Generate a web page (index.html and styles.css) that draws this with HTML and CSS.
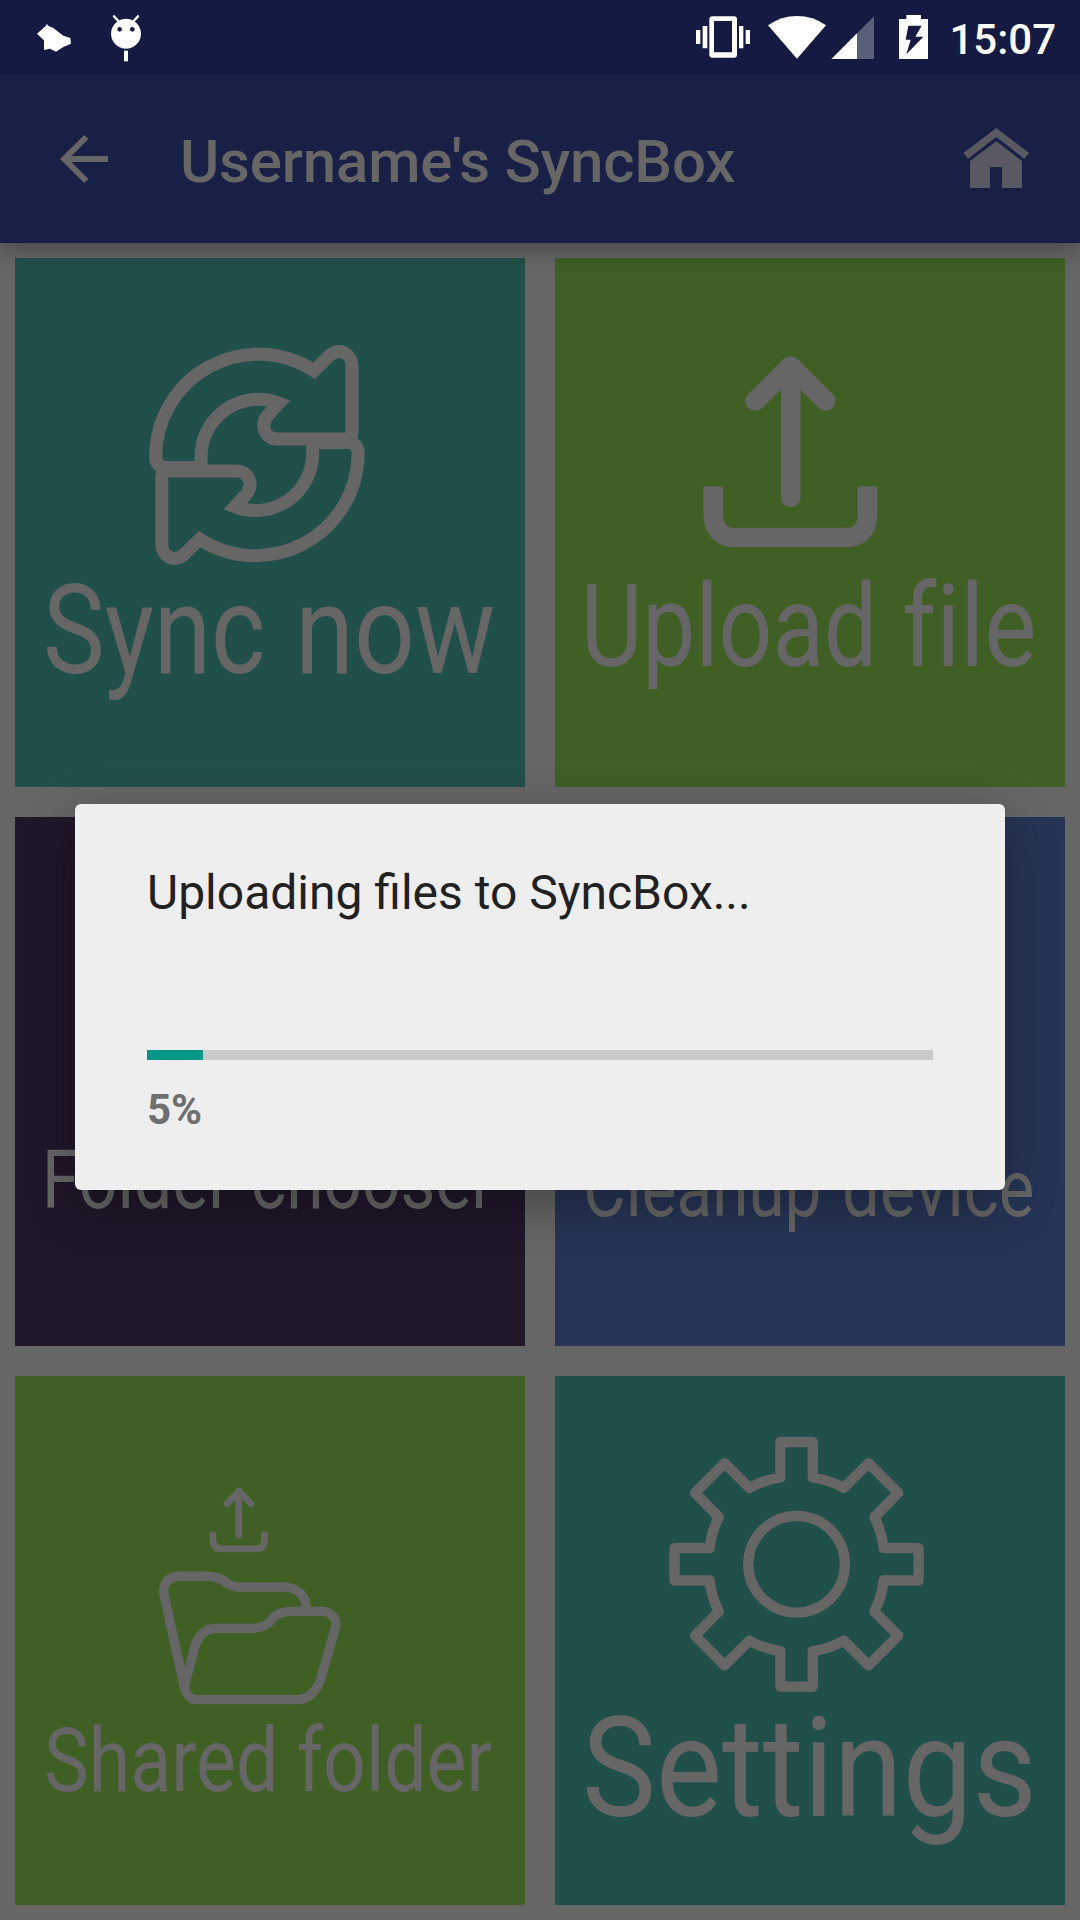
FILE: index.html
```html
<!DOCTYPE html>
<html lang="en">
<head>
<meta charset="utf-8">
<title>Username's SyncBox</title>
<link rel="stylesheet" href="styles.css">
</head>
<body>
<div class="screen">
  <header class="status-bar">
    <div class="status-left">
      <svg class="icon-cloud" viewBox="108 42 108 144"><path d="M111 101L137 78L141 71L144 77L160 84L190 107L211 114L213 131L190 141L168 155L150 146L132 150L132 121Z"/></svg>
      <svg class="icon-debug" viewBox="330 42 96 144"><path fill-rule="evenodd" d="M378 56a45 45 0 1 0 .1 0zM359 81a7 7 0 1 1-.1 0zM397 81a7 7 0 1 1-.1 0z"/><path d="M372 152h12v32h-12z"/><path class="antenna" d="M342 49l13 14M414 49l-13 14"/></svg>
    </div>
    <div class="status-right">
      <svg class="icon-vibrate" viewBox="48 42 162 144"><path fill-rule="evenodd" d="M97 49h65q9 0 9 9v106q0 9-9 9H97q-9 0-9-9V58q0-9 9-9zM102 63v94h54V63z"/><path d="M68 78h14v67H68zM177 78h13v67h-13zM48 90h13v42H48zM197 90h13v42h-13z"/></svg>
      <svg class="icon-wifi" viewBox="264 42 174 144"><path d="M264 76Q303 48 351 48T438 76L351 176Z"/></svg>
      <svg class="icon-signal" viewBox="453 42 129 144"><path class="dim" d="M531 100L582 49V177H531Z"/><path d="M454 177L531 100V177Z"/></svg>
      <svg class="icon-battery" viewBox="657 42 87 144"><path fill-rule="evenodd" d="M657 57h22V45h44v12h21v120h-87zM685 77L677 119H692L679 163L730 110H706L725 77Z"/></svg>
      <span class="clock">15:07</span>
    </div>
  </header>

  <div class="app-bar">
    <svg class="icon-back" viewBox="180 402 144 150"><path d="M259 411L193 477L259 543M196 477H324"/></svg>
    <h1 class="app-title">Username's SyncBox</h1>
    <svg class="icon-home" viewBox="849 384 198 180"><path d="M949 384L1047 459L1033 476L949 411L864 476L850 459Z"/><path d="M949 424L1026 483V564H966V501H930V564H870V483Z"/></svg>
  </div>

  <main class="tiles">
    <svg class="tile teal" viewBox="0 0 510 529">
      <defs>
        <path id="sync-arrow" d="M140.7 198.5A102.6 102.6 0 0 1 299.1 112.7L314 98.2C324.5 88 337 96 337 108V174Q337 181 330 181H262C250 181 244.5 167 253 157L264 145.2A57.2 57.2 0 0 0 186.1 198.5V209.5H150Q140.7 208 140.7 198.5Z"/>
      </defs>
      <g class="line w13"><use href="#sync-arrow"/><use href="#sync-arrow" transform="rotate(180 241.9 196.95)"/></g>
      <g class="label" font-size="125"><text transform="translate(28 415) scale(.83 1)" textLength="268" lengthAdjust="spacingAndGlyphs">Sync</text><text transform="translate(280 415) scale(.86 1)" textLength="233" lengthAdjust="spacingAndGlyphs">now</text></g>
    </svg>
    <svg class="tile green" viewBox="0 0 510 529">
      <g class="line w19"><path class="round" d="M235.7 239.4V108M200.2 143L235.7 108L270.8 143"/><path d="M158.2 228.4V258Q160 279.5 180 279.5H291Q311 279.5 312.5 258V228.4"/></g>
      <g class="label" font-size="115"><text transform="translate(26 407.7) scale(.825 1)" textLength="359" lengthAdjust="spacingAndGlyphs">Upload</text><text transform="translate(347 407.7) scale(.857 1)" textLength="157" lengthAdjust="spacingAndGlyphs">file</text></g>
    </svg>
    <svg class="tile purple" viewBox="0 0 510 529">
      <g class="label" font-size="81.7"><text transform="translate(27 391) scale(.83 1)" textLength="228" lengthAdjust="spacingAndGlyphs">Folder</text><text transform="translate(236 391) scale(.83 1)" textLength="293" lengthAdjust="spacingAndGlyphs">chooser</text></g>
    </svg>
    <svg class="tile blue" viewBox="0 0 510 529">
      <g class="label" font-size="80"><text transform="translate(28 399) scale(.825 1)" textLength="289" lengthAdjust="spacingAndGlyphs">Cleanup</text><text transform="translate(287 399) scale(.84 1)" textLength="229" lengthAdjust="spacingAndGlyphs">device</text></g>
    </svg>
    <svg class="tile green" viewBox="0 0 510 529">
      <g class="line w7"><path class="round" d="M223.7 159V115M212 127.6L223.7 115.5L236 127.6"/><path d="M197.8 155.8V164Q199 172.9 206 172.9H241.5Q248.5 172.9 249.5 164V155.8"/></g>
      <path class="line w9" d="M290.8 235V230.4C290.8 218 280 211.1 269.1 211.1H226C218 211.1 213 208.5 209.5 205.4C205 201 198 200.2 189 200.2H164C153 200.2 147 209 148.9 218L169.2 310.8C171 318 175 323.6 181.3 323.6H282.9C294 323.6 303 313 306 301.9L320.4 251.9C322.5 243 316 235.4 307 235.4H277.7C268 235.4 261 238 257 243C253.5 249 247 252.2 236.4 252.2H202C190 252.2 183 260 179.6 271.5L169.2 310.8"/>
      <g class="label" font-size="89.5"><text transform="translate(29 415) scale(.84 1)" textLength="279" lengthAdjust="spacingAndGlyphs">Shared</text><text transform="translate(282 415) scale(.84 1)" textLength="232" lengthAdjust="spacingAndGlyphs">folder</text></g>
    </svg>
    <svg class="tile teal" viewBox="0 0 510 529">
      <g class="line w10" transform="translate(241.6 188.3)">
        <circle r="48.3"/>
        <path d="M-16.2 -122.3H16.2V-86.8A88.3 88.3 0 0 1 47.2 -76.4L72 -101.1L101.6 -71.4L77.8 -47.2A90 90 0 0 1 87 -16.2H122V16.2H87A90 90 0 0 1 77.8 47.2L101.6 71.4L72 101.1L47.2 76.4A90 90 0 0 1 16.2 86.8V122.3H-16.2V86.8A90 90 0 0 1 -47.2 76.4L-72 101.1L-101.6 71.4L-77.8 47.2A90 90 0 0 1 -87 16.2H-122V-16.2H-87A90 90 0 0 1 -77.8 -47.2L-101.6 -71.4L-72 -101.1L-47.2 -76.4A90 90 0 0 1 -16.2 -86.8Z"/>
      </g>
      <g class="label" font-size="139"><text transform="translate(27 440) scale(.897 1)" textLength="507" lengthAdjust="spacingAndGlyphs">Settings</text></g>
    </svg>
  </main>

  <div class="overlay">
    <section class="dialog">
      <p class="message">Uploading files to SyncBox...</p>
      <div class="track"><div class="fill"></div></div>
      <p class="percent">5%</p>
    </section>
  </div>
</div>
</body>
</html>
```
FILE: styles.css
```css
* { box-sizing: border-box; }
body { margin: 0; background: #666; font-family: Roboto, sans-serif; }
h1, p { margin: 0; }
svg { display: block; flex: none; }

.screen { position: relative; width: 1080px; height: 1920px; display: flex; flex-direction: column; overflow: hidden; }

.status-bar { height: 75px; flex: none; z-index: 2; display: flex; justify-content: space-between; padding: 14px 24px 0 36px; background: #141a41; color: #fff; }
.status-left, .status-right { display: flex; }
.status-left { gap: 38px; }
.status-bar svg { height: 48px; fill: currentColor; }
.icon-cloud { width: 36px; }
.icon-debug { width: 32px; }
.antenna { stroke: currentColor; stroke-width: 7; stroke-linecap: round; }
.icon-vibrate { width: 54px; }
.icon-wifi { width: 58px; margin-left: 18px; }
.icon-signal { width: 43px; margin-left: 5px; }
.icon-battery { width: 29px; margin-left: 25px; }
.dim { opacity: .3; }
.clock { margin-left: 21px; font-size: 42px; font-weight: 500; line-height: 51px; }

.app-bar { height: 168px; flex: none; display: flex; align-items: flex-start; padding: 53px 51px 0 60px; background: #192046; color: #666; box-shadow: 0 4px 24px rgba(0, 0, 0, .36); z-index: 1; }
.icon-back { width: 48px; height: 50px; margin-top: 6px; fill: none; stroke: currentColor; stroke-width: 18; }
.app-title { flex: 1; margin-left: 72px; font-size: 60px; font-weight: 500; line-height: 68px; letter-spacing: -.18px; white-space: nowrap; }
.icon-home { width: 66px; height: 60px; fill: #595a61; }

.tiles { flex: 1; display: grid; grid-template-columns: 510px 510px; grid-template-rows: repeat(3, 529px); gap: 30px; padding: 15px; }
.tile { width: 510px; height: 529px; }
.teal { background: #214f4a; }
.green { background: #3f5f24; }
.purple { background: #20172a; }
.blue { background: #263556; }
.line { fill: none; stroke: #666; }
.w7 { stroke-width: 6.8; }
.w9 { stroke-width: 9.4; }
.w10 { stroke-width: 10.3; stroke-linejoin: round; }
.w13 { stroke-width: 13; }
.w19 { stroke-width: 19.6; }
.round { stroke-linecap: round; stroke-linejoin: round; }
.label { fill: #666; font-family: Roboto, sans-serif; font-weight: 400; font-variant-ligatures: none; }

.overlay { position: absolute; inset: 75px 0 1px; z-index: 2; display: flex; align-items: center; justify-content: center; }
.dialog { width: 930px; height: 386px; padding: 61px 72px 0; border-radius: 6px; background: #eee; box-shadow: 0 16px 52px rgba(0, 0, 0, .32); }
.message { height: 56px; font-size: 48px; line-height: 56px; color: #212121; white-space: nowrap; }
.track { height: 10px; margin-top: 129px; background: #cacaca; }
.fill { width: 56px; height: 100%; background: #009688; }
.percent { margin-top: 25px; font-size: 42px; font-weight: 700; line-height: 50px; color: #6f6f6f; }
```
